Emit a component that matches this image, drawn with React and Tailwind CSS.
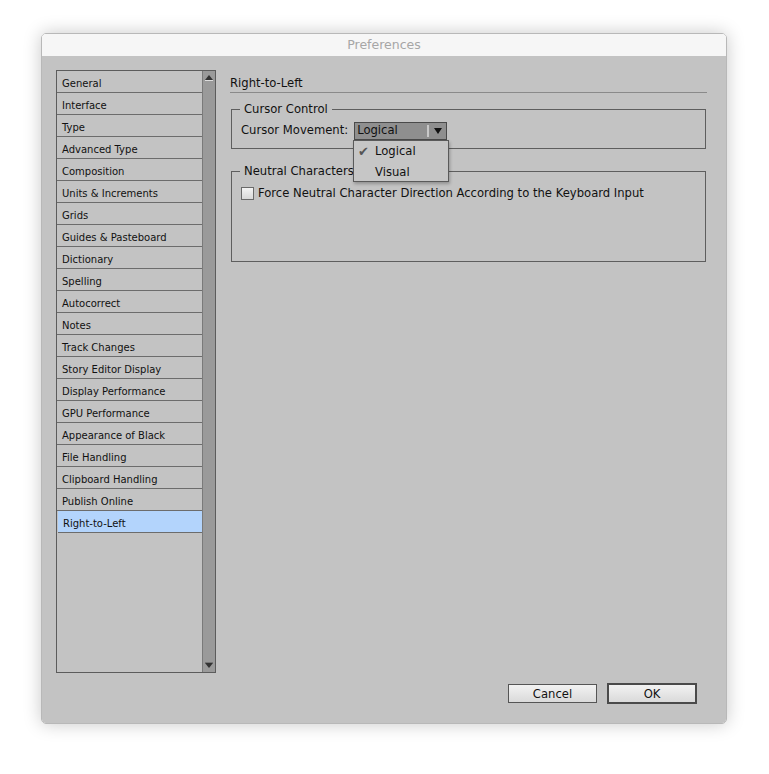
import React from "react";

const items = [
  "General","Interface","Type","Advanced Type","Composition","Units & Increments","Grids",
  "Guides & Pasteboard","Dictionary","Spelling","Autocorrect","Notes","Track Changes",
  "Story Editor Display","Display Performance","GPU Performance","Appearance of Black",
  "File Handling","Clipboard Handling","Publish Online","Right-to-Left",
];

const font = { fontFamily: '"DejaVu Sans", "Noto Sans", sans-serif' };

export default function App() {
  return (
    <div className="w-[769px] h-[774px] bg-white overflow-hidden" style={font}>
      <div className="ml-[41px] mt-[33px] w-[686px] h-[691px] rounded-[5px] flex flex-col overflow-hidden shadow-[0_0_18px_rgba(0,0,0,0.22)] border border-[#b8b8b8]">
        <div className="h-[22px] pt-[1px] bg-[#f6f6f6] flex items-center justify-center text-[12.5px] text-[#a6a6a6] shrink-0">Preferences</div>
        <div className="flex-1 bg-[#c3c3c3] relative flex pl-[14px] pt-[14px]">
          {/* List */}
          <div className="w-[160px] h-[603px] border border-[#5c5c5c] flex">
            <div className="flex-1 flex flex-col">
              {items.map((it) => (
                <div
                  key={it}
                  className={`h-[22px] shrink-0 flex items-center pl-[5px] pt-[3px] text-[10px] text-[#111] border-b border-[#6c6c6c] ${it === "Right-to-Left" ? "bg-[#b3d4fc] ml-[1px]" : ""}`}
                >
                  {it}
                </div>
              ))}
            </div>
            <div className="w-[13px] bg-[#9a9a9a] border-l border-[#7a7a7a] flex flex-col justify-between items-center py-[4px]">
              <svg width="8" height="6" viewBox="0 0 8 6"><path d="M4 0 L8 5 L0 5 Z" fill="#333" /><rect x="0" y="5" width="8" height="1" fill="#ddd" /></svg>
              <svg width="8" height="6" viewBox="0 0 8 6"><rect x="0" y="0" width="8" height="1" fill="#777" /><path d="M0 1 L8 1 L4 6 Z" fill="#333" /></svg>
            </div>
          </div>

          {/* Right pane */}
          <div className="ml-[14px] w-[477px] flex flex-col">
            <div className="text-[11.6px] text-[#111] h-[23px] flex items-end pb-0 border-b border-[#8a8a8a] w-[477px]">Right-to-Left</div>

            <div className="relative mt-[16px] ml-[1px] w-[475px] h-[40px] border border-[#5e5e5e]">
              <div className="absolute -top-[9px] left-[8px] px-[4px] bg-[#c3c3c3] text-[11.6px] leading-[16px] text-[#111]">Cursor Control</div>
              <div className="flex items-center mt-[12px] ml-[9px] text-[11.6px] text-[#111]">
                <span>Cursor Movement:</span>
                <div className="ml-[6px] w-[93px] h-[18px] bg-[#8f8f8f] border border-[#4a4a4a] flex items-center text-[11.6px] text-[#111]">
                  <span className="pl-[2px] flex-1">Logical</span>
                  <div className="w-[2px] h-[12px] border-l border-r border-[#c8c8c8] mr-[5px]" />
                  <svg width="8" height="6" viewBox="0 0 8 6" className="mr-[4px]"><path d="M0 0 L8 0 L4 6 Z" fill="#111" /></svg>
                </div>
              </div>
            </div>

            <div className="relative mt-[22px] ml-[1px] w-[475px] h-[91px] border border-[#5e5e5e]">
              <div className="absolute -top-[9px] left-[8px] px-[4px] bg-[#c3c3c3] text-[11.6px] leading-[16px] text-[#111]">Neutral Characters</div>
              <div className="flex items-center mt-[13px] ml-[9px] text-[11.6px] text-[#111]">
                <div className="w-[13px] h-[13px] border border-[#6a6a6a] bg-gradient-to-b from-[#f4f4f4] to-[#d8d8d8]" />
                <span className="ml-[4px]">Force Neutral Character Direction According to the Keyboard Input</span>
              </div>
            </div>
          </div>

          {/* Dropdown menu overlay */}
          <div className="absolute left-[311px] top-[84px] w-[96px] h-[42px] bg-[#c6c6c6] border border-[#5a5a5a] shadow-[1px_2px_3px_rgba(0,0,0,0.25)] text-[11.6px] text-[#111] flex flex-col">
            <div className="h-[21px] shrink-0 flex items-center">
              <span className="w-[21px] pl-[4px] text-[#555] text-[13px]">✔</span>
              <span>Logical</span>
            </div>
            <div className="h-[21px] shrink-0 flex items-center">
              <span className="w-[21px]" />
              <span>Visual</span>
            </div>
          </div>

          {/* Buttons */}
          <div className="absolute right-[29px] bottom-[19px] flex items-center gap-[10px]">
            <button className="w-[89px] h-[19px] pt-[2px] border border-[#555] bg-gradient-to-b from-[#f2f2f2] to-[#dadada] text-[11.6px] text-[#111] flex items-center justify-center">Cancel</button>
            <button className="w-[90px] h-[21px] pt-[2px] border-2 border-[#4a4a4a] bg-gradient-to-b from-[#f2f2f2] to-[#dadada] text-[11.6px] text-[#111] flex items-center justify-center">OK</button>
          </div>
        </div>
      </div>
    </div>
  );
}
